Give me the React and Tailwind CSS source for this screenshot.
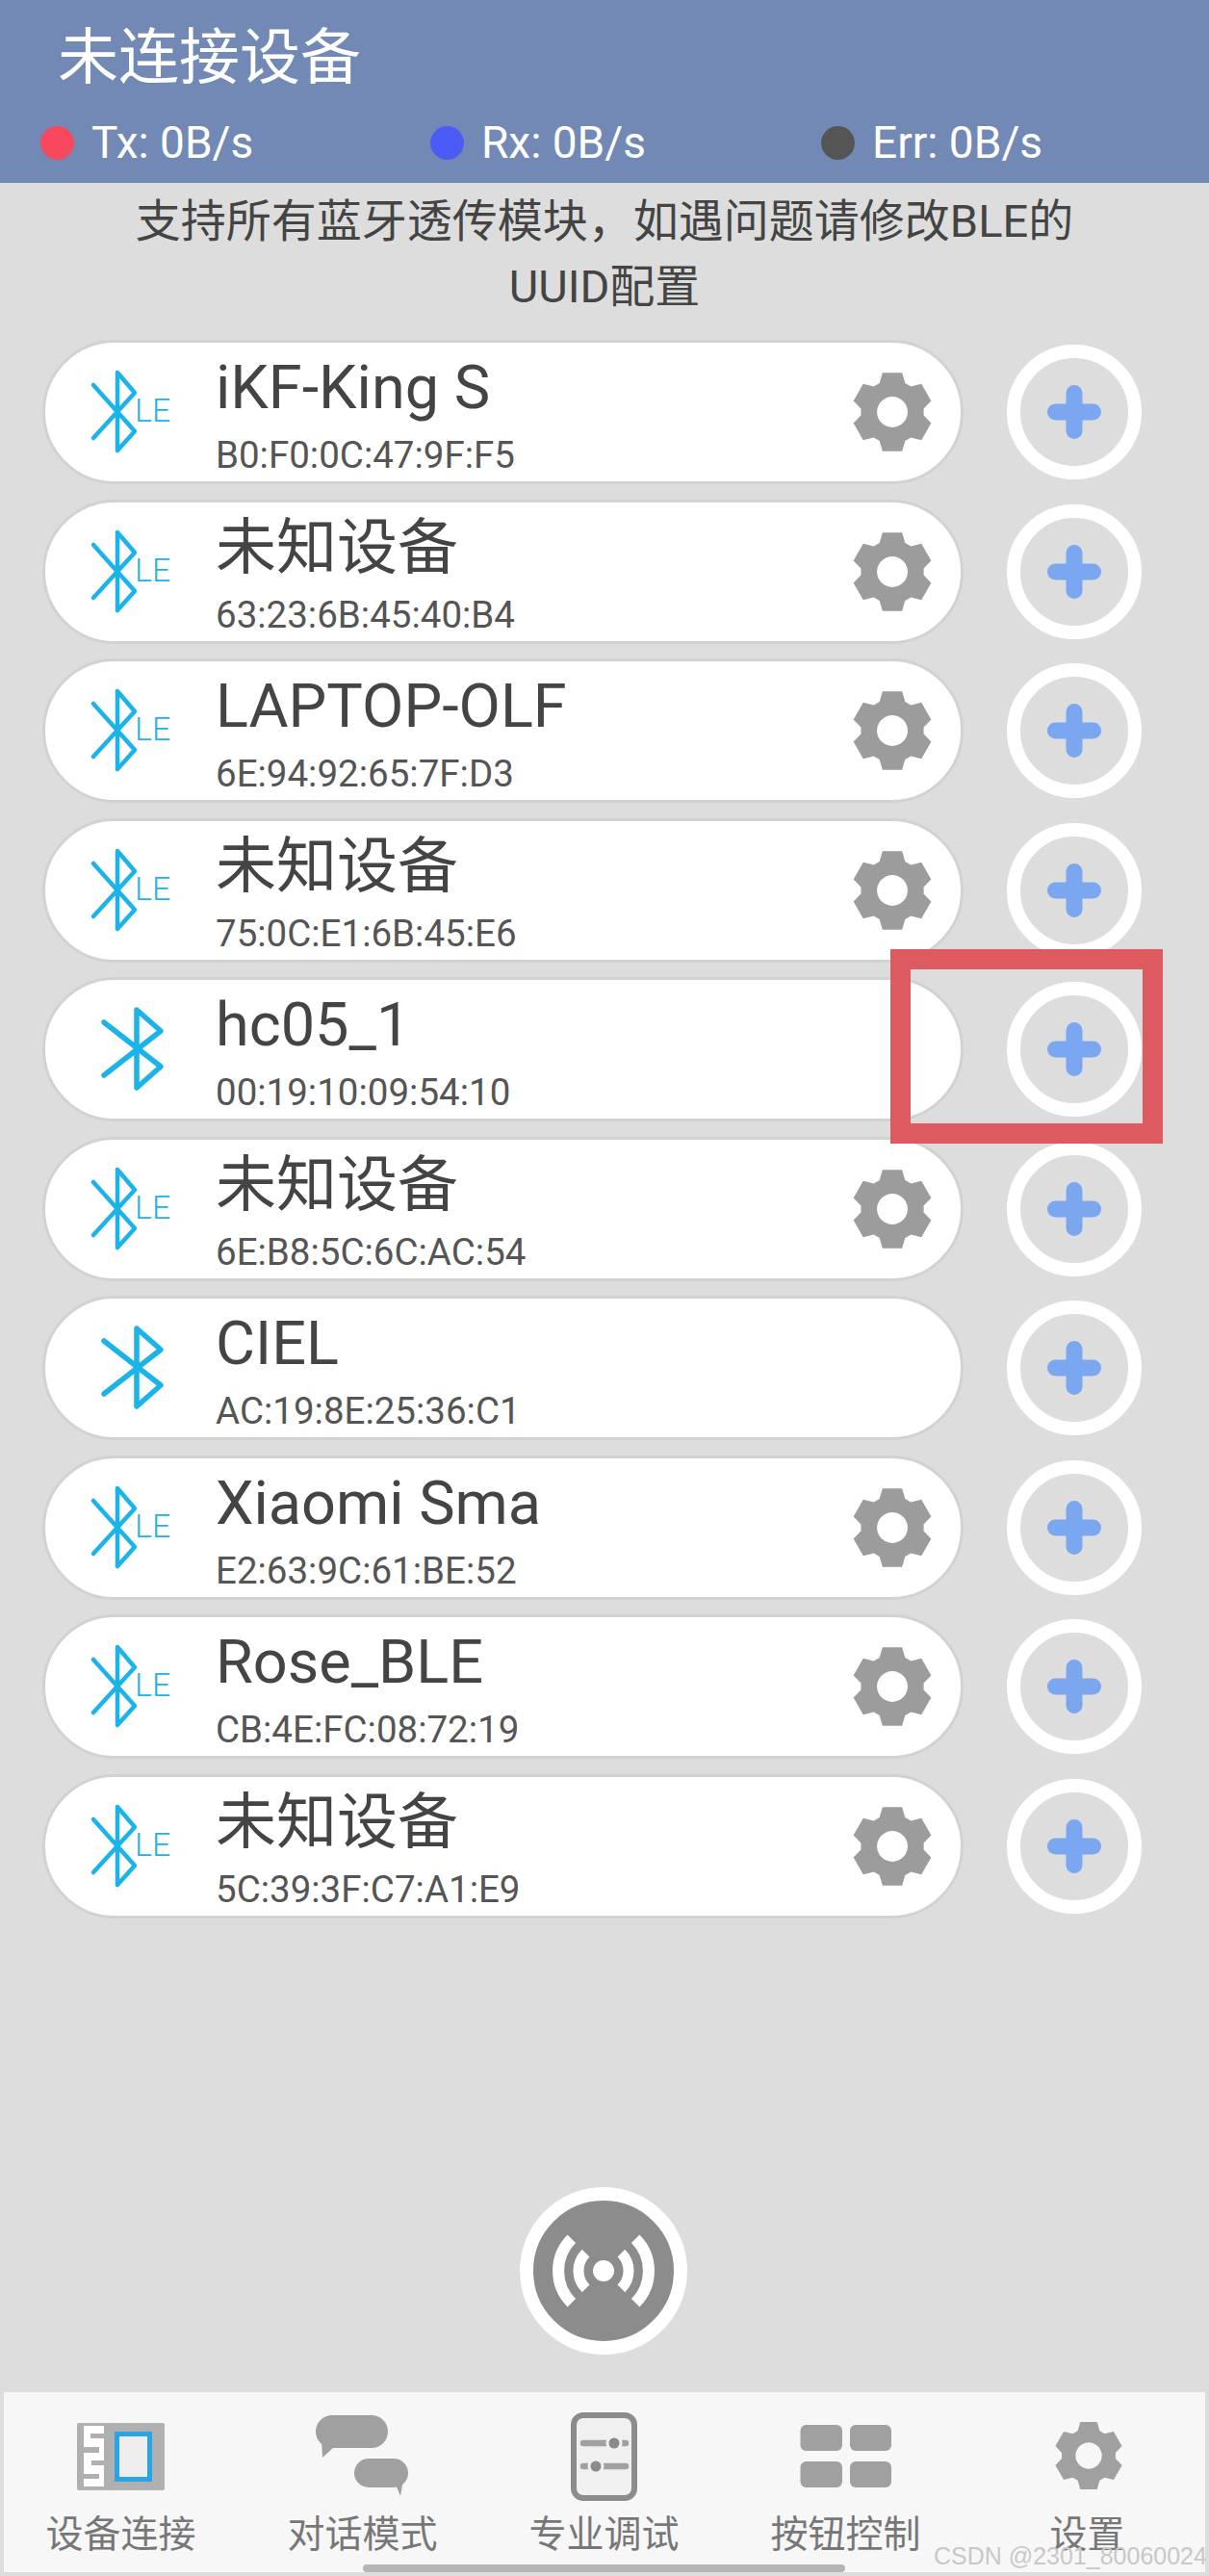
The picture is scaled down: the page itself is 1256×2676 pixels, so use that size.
const devices = [
  { name: 'iKF-King S', mac: 'B0:F0:0C:47:9F:F5', ble: true },
  { name: '未知设备', mac: '63:23:6B:45:40:B4', ble: true },
  { name: 'LAPTOP-OLF', mac: '6E:94:92:65:7F:D3', ble: true },
  { name: '未知设备', mac: '75:0C:E1:6B:45:E6', ble: true },
  { name: 'hc05_1', mac: '00:19:10:09:54:10', ble: false },
  { name: '未知设备', mac: '6E:B8:5C:6C:AC:54', ble: true },
  { name: 'CIEL', mac: 'AC:19:8E:25:36:C1', ble: false },
  { name: 'Xiaomi Sma', mac: 'E2:63:9C:61:BE:52', ble: true },
  { name: 'Rose_BLE', mac: 'CB:4E:FC:08:72:19', ble: true },
  { name: '未知设备', mac: '5C:39:3F:C7:A1:E9', ble: true },
];

// six teeth, one pointing straight up, on a 100x100 box
function gearPath() {
  const pt = (r, deg) => {
    const a = (deg * Math.PI) / 180;
    return `${(50 + r * Math.cos(a)).toFixed(2)} ${(50 - r * Math.sin(a)).toFixed(2)}`;
  };
  const pts = [];
  for (let k = 0; k < 6; k++) {
    const c = 90 - k * 60;
    pts.push(pt(39, c + 24), pt(50, c + 14), pt(50, c - 14), pt(39, c - 24));
  }
  return `M${pts.join('L')}Z M50 31a19 19 0 1 0 0.01 0Z`;
}

function Gear({ className }) {
  return (
    <svg viewBox="0 0 100 100" className={className} fill="currentColor">
      <path d={gearPath()} fillRule="evenodd" />
    </svg>
  );
}

function BluetoothIcon({ ble }) {
  return (
    <svg viewBox="0 0 100 90" className="w-[100px] h-[90px] shrink-0 ml-[46px]" fill="none">
      {ble ? (
        <>
          <path
            d="M4 17L47 65L29 85V4L47 25L4 72"
            stroke="#1cb4e8"
            strokeWidth="4.5"
            strokeLinecap="round"
            strokeLinejoin="round"
          />
          <text x="47" y="55" fontFamily="Roboto, sans-serif" fontWeight="300" fontSize="34" fill="#1cb4e8">
            LE
          </text>
        </>
      ) : (
        <path
          d="M15 17L74 63L49 85V4L74 26L15 72"
          stroke="#1cb4e8"
          strokeWidth="5.5"
          strokeLinecap="round"
          strokeLinejoin="round"
        />
      )}
    </svg>
  );
}

function DeviceRow({ device }) {
  return (
    <div className="flex items-center pl-[44px]">
      <div className="w-[957px] h-[150px] rounded-full bg-white border-[3px] border-[#d2d2d2] flex items-center shrink-0">
        <BluetoothIcon ble={device.ble} />
        <div className="ml-[31px] flex-1 flex flex-col pt-[5px]">
          <div className="text-[63px] leading-[70px] text-[#444444]">{device.name}</div>
          <div className="text-[38.5px] leading-[40px] mt-[15px] text-[#555555]">{device.mac}</div>
        </div>
        {device.ble && <Gear className="w-[84px] h-[84px] mr-[29px] text-[#9c9c9c]" />}
      </div>
      <div className="ml-[45px] w-[140px] h-[140px] rounded-full border-[14px] border-white flex items-center justify-center shrink-0">
        <svg viewBox="0 0 60 60" className="w-[60px] h-[60px]">
          <path d="M30 10.5V49.5M10.5 30H49.5" stroke="#7ba6f0" strokeWidth="17" strokeLinecap="round" />
        </svg>
      </div>
    </div>
  );
}

function NavItem({ label, children }) {
  return (
    <div className="flex flex-col items-center">
      <svg viewBox="0 0 100 92" className="w-[100px] h-[92px]">
        {children}
      </svg>
      <div className="mt-[13px] text-[39px] leading-[44px] text-[#777777]">{label}</div>
    </div>
  );
}

function Stat({ dot, label, className }) {
  return (
    <div className={`flex items-center ${className}`}>
      <div className={`w-[35px] h-[35px] rounded-full ${dot}`} />
      <div className="ml-[18px] text-[46px] leading-[54px] text-white">{label}</div>
    </div>
  );
}

export default function App() {
  return (
    <div className="relative w-[1256px] h-[2676px] overflow-hidden flex flex-col bg-[#dddddd] font-['Roboto','Noto_Sans_CJK_SC',sans-serif]">
      {/* header */}
      <div className="h-[190px] bg-[#7289b5] shrink-0 flex flex-col">
        <div className="pl-[60px] pt-[24px] text-[63px] leading-[72px] text-white">未连接设备</div>
        <div className="flex pl-[42px] mt-[25px]">
          <Stat dot="bg-[#f8485e]" label="Tx: 0B/s" className="w-[405px]" />
          <Stat dot="bg-[#4a5cf5]" label="Rx: 0B/s" className="w-[406px]" />
          <Stat dot="bg-[#555555]" label="Err: 0B/s" />
        </div>
      </div>

      <div className="pt-[6px] text-center text-[47px] leading-[68px] text-[#444444]">
        支持所有蓝牙透传模块，如遇问题请修改BLE的
        <br />
        UUID配置
      </div>

      <div className="mt-[21px] flex flex-col gap-[15.5px]">
        {devices.map((d) => (
          <DeviceRow key={d.mac} device={d} />
        ))}
      </div>

      <div className="mt-[279px] ml-[540px] w-[174px] h-[174px] rounded-full border-[14px] border-white bg-[#8c8c8c] shrink-0">
        <svg viewBox="0 0 146 146" className="w-[146px] h-[146px]" fill="none" stroke="white">
          <circle cx="73" cy="73" r="11" fill="white" stroke="none" />
          <path d="M39.8 39.8A47 47 0 0 0 39.8 106.2M106.2 39.8A47 47 0 0 1 106.2 106.2" strokeWidth="12" />
          <path d="M54.6 54.6A26 26 0 0 0 54.6 91.4M91.4 54.6A26 26 0 0 1 91.4 91.4" strokeWidth="11" />
        </svg>
      </div>

      {/* bottom tabs */}
      <div className="relative mt-auto mb-[4px] mx-[4px] h-[187px] bg-[#f7f7f7] pt-[21px]">
        <div className="grid grid-cols-[repeat(5,251px)] -ml-[4px]">
          <NavItem label="设备连接">
            <rect x="4" y="11" width="91" height="70" rx="2" fill="#b0b0b0" />
            <rect x="11" y="14" width="21" height="63" fill="white" />
            <rect x="18" y="22" width="14" height="5" fill="#b0b0b0" />
            <rect x="11" y="36" width="16" height="6" fill="#b0b0b0" />
            <rect x="19" y="50" width="13" height="5" fill="#b0b0b0" />
            <rect x="11" y="64" width="16" height="5" fill="#b0b0b0" />
            <rect x="45.5" y="22.5" width="34" height="47" fill="#eeeeee" stroke="#2aa4e4" strokeWidth="5" />
          </NavItem>
          <NavItem label="对话模式">
            <g fill="#a0a0a0">
              <rect x="1" y="3" width="75" height="34" rx="17" />
              <path d="M7 28L8 47L20 36Z" />
              <rect x="41" y="48" width="56" height="30" rx="15" />
              <path d="M84 75L89 87L92 70Z" />
            </g>
          </NavItem>
          <NavItem label="专业调试">
            <rect x="18" y="3" width="63" height="86" rx="10" fill="#f0f0f0" stroke="#8c8c8c" strokeWidth="6" />
            <path d="M28 32H72M28 56H72" stroke="#a0a0a0" strokeWidth="6.5" strokeLinecap="round" />
            <circle cx="60" cy="32" r="7" fill="#8a8a8a" stroke="#f0f0f0" strokeWidth="3" />
            <circle cx="41" cy="56" r="7" fill="#8a8a8a" stroke="#f0f0f0" strokeWidth="3" />
          </NavItem>
          <NavItem label="按钮控制">
            <g fill="#a0a0a0">
              <rect x="2.5" y="13" width="43.5" height="27" rx="6" />
              <rect x="54" y="13" width="43" height="27" rx="6" />
              <rect x="2.5" y="51" width="43.5" height="27" rx="6" />
              <rect x="54" y="51" width="43" height="27" rx="6" />
            </g>
          </NavItem>
          <NavItem label="设置">
            <svg x="15" y="9" width="72" height="72" viewBox="0 0 100 100" fill="#a0a0a0">
              <path d={gearPath()} fillRule="evenodd" />
            </svg>
          </NavItem>
        </div>
        <div className="absolute left-[373px] bottom-0 w-[501px] h-[8px] rounded-full bg-[#b5b5b5]" />
      </div>

      {/* annotation + watermark sit on top of the screenshot */}
      <div className="absolute left-[925px] top-[986px] w-[283px] h-[202px] border-[21px] border-[#dc5a60]" />
      <div className="absolute left-[970px] top-[2640px] font-['Liberation_Sans',sans-serif] text-[25px] leading-[30px] whitespace-nowrap text-[#c8c8c8]">
        CSDN @2301_80060024
      </div>
    </div>
  );
}
